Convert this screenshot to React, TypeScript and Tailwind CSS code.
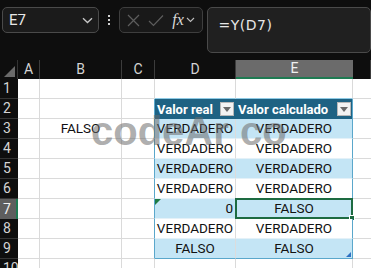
import React from "react";

const cols = ["", "A", "B", "C", "D", "E", ""];

function Chevron({ className = "" }: { className?: string }) {
  return (
    <svg className={className} width="11" height="7" viewBox="0 0 11 7" fill="none">
      <path d="M1 1.2 L5.5 5.5 L10 1.2" stroke="#c8c8c8" strokeWidth="1.3" />
    </svg>
  );
}

function DropBtn() {
  return (
    <div className="w-[14px] h-[14px] bg-[#f3f3f3] border border-[#b8b8b8] flex items-center justify-center shrink-0">
      <svg width="8" height="5" viewBox="0 0 8 5">
        <path d="M0 0 L8 0 L4 5 Z" fill="#6a6a6a" />
      </svg>
    </div>
  );
}

export default function App() {
  const rowsData: Record<number, { b?: string; d?: string; e?: string; dAlign?: string }> = {
    3: { b: "FALSO", d: "VERDADERO", e: "VERDADERO" },
    4: { d: "VERDADERO", e: "VERDADERO" },
    5: { d: "VERDADERO", e: "VERDADERO" },
    6: { d: "VERDADERO", e: "VERDADERO" },
    7: { d: "0", e: "FALSO", dAlign: "right" },
    8: { d: "VERDADERO", e: "VERDADERO" },
    9: { d: "FALSO", e: "FALSO" },
  };

  const rows = [1, 2, 3, 4, 5, 6, 7, 8, 9, 10];

  return (
    <div
      className="relative w-[371px] h-[268px] overflow-hidden bg-[#0e0e0e]"
      style={{ fontFamily: "Roboto, 'Liberation Sans', sans-serif" }}
    >
      {/* Top formula bar */}
      <div className="h-[60px] flex items-start pt-[7px] pl-[2px]">
        <div className="w-[100px] h-[26px] rounded-[5px] border border-[#4a4a4a] bg-[#1b1b1b] flex items-center justify-between pl-[6px] pr-[5px]">
          <span className="text-[15px] text-[#e8e8e8] leading-none">E7</span>
          <Chevron />
        </div>
        <div className="w-[21px] h-[26px] flex flex-col items-center justify-center gap-[2px]">
          <div className="w-[2px] h-[2px] bg-[#cfcfcf]" />
          <div className="w-[2px] h-[2px] bg-[#cfcfcf]" />
          <div className="w-[2px] h-[2px] bg-[#cfcfcf]" />
        </div>
        <div className="w-[86px] h-[26px] rounded-[5px] border border-[#3e3e3e] bg-[#191919] flex items-center pl-[7px] gap-[8px]">
          <svg width="13" height="13" viewBox="0 0 13 13">
            <path d="M1 1 L12 12 M12 1 L1 12" stroke="#5d5d5d" strokeWidth="1.2" />
          </svg>
          <svg width="16" height="13" viewBox="0 0 16 13">
            <path d="M1 7 L5.5 11.5 L15 1.5" stroke="#5d5d5d" strokeWidth="1.2" fill="none" />
          </svg>
          <div className="flex items-center gap-[2px]">
            <span
              className="text-[16px] italic text-[#dadada] leading-none"
              style={{ fontFamily: "'Liberation Serif', serif" }}
            >
              fx
            </span>
            <svg width="9" height="6" viewBox="0 0 9 6" fill="none">
              <path d="M1 1 L4.5 4.5 L8 1" stroke="#bdbdbd" strokeWidth="1.1" />
            </svg>
          </div>
        </div>
        <div className="ml-[4px] w-[170px] h-[46px] rounded-[5px] border border-[#4a4a4a] bg-[#202020] pl-[11px] pt-[5px]">
          <span
            className="text-[14px] text-[#e6e6e6] tracking-[0.5px]"
            style={{ fontFamily: "'DejaVu Sans', sans-serif" }}
          >
            =Y(D7)
          </span>
        </div>
      </div>

      {/* Grid */}
      <div className="grid grid-cols-[18px_22px_82px_33px_81px_117px_1fr] grid-rows-[19px_repeat(10,20px)]">
        {cols.map((c, i) => {
          if (i === 0) {
            return (
              <div key="corner" className="relative bg-[#0e0e0e] border-r border-[#333]">
                <svg className="absolute right-[2px] bottom-[2px]" width="11" height="11" viewBox="0 0 11 11">
                  <path d="M11 0 L11 11 L0 11 Z" fill="#6a6a6a" />
                </svg>
              </div>
            );
          }
          if (c === "E") {
            return (
              <div
                key={i}
                className="bg-[#6b6b6b] border-b-2 border-[#1f7a52] flex items-center justify-center text-[14px] text-[#f0f0f0]"
              >
                E
              </div>
            );
          }
          return (
            <div
              key={i}
              className="bg-[#0e0e0e] border-r border-[#3c3c3c] flex items-center justify-center text-[14px] text-[#d4d4d4]"
            >
              {c}
            </div>
          );
        })}

        {rows.map((r) => {
          const data = rowsData[r] || {};
          const inTable = r >= 2 && r <= 9;
          const band = r >= 3 && r <= 9 && r % 2 === 1;
          const tableBg = band ? "bg-[#c4e5f5]" : "bg-white";
          return (
            <React.Fragment key={r}>
              {r === 7 ? (
                <div className="bg-[#5e5e5e] border-r-2 border-[#1f7a52] flex items-center pl-[3px] text-[14px] text-[#f0f0f0]">
                  {r}
                </div>
              ) : (
                <div className="bg-[#0e0e0e] border-b border-[#333] flex items-center pl-[3px] text-[14px] text-[#d4d4d4]">
                  {r}
                </div>
              )}
              <div className="bg-white border-r border-b border-[#dadada]" />
              <div className="bg-white border-r border-b border-[#dadada] flex items-center justify-center text-[13.5px] text-[#111]">
                {data.b}
              </div>
              <div
                className={`bg-white border-b border-r ${
                  inTable ? "border-b-[#dadada] border-r-[#5aa7cb]" : "border-[#dadada]"
                }`}
              />
              {r === 2 ? (
                <div className="bg-[#1e6283] border-r border-r-[#1e6283] flex items-center justify-between pl-[2px] pr-[1px]">
                  <span className="text-[13px] font-bold text-white leading-none">Valor real</span>
                  <DropBtn />
                </div>
              ) : inTable ? (
                <div
                  className={`relative ${tableBg} border-r border-b ${r === 9 ? "border-b-[#5aa7cb]" : "border-b-[#e4f1f8]"} border-r-[#dcdcdc] flex items-center ${
                    data.dAlign === "right" ? "justify-end pr-[2px]" : "justify-center"
                  } text-[13.5px] text-[#111]`}
                >
                  {r === 7 && (
                    <svg className="absolute left-0 top-0" width="6" height="6" viewBox="0 0 6 6">
                      <path d="M0 0 L6 0 L0 6 Z" fill="#1e7b45" />
                    </svg>
                  )}
                  {data.d}
                </div>
              ) : (
                <div className={`bg-white border-r border-b ${r === 1 ? "border-b-[#8fcbe5]" : "border-b-[#dadada]"} border-r-[#dadada]`} />
              )}
              {r === 2 ? (
                <div className="bg-[#1e6283] border-r border-r-[#5aa7cb] flex items-center justify-between pl-[2px] pr-[1px]">
                  <span className="text-[13px] font-bold text-white leading-none">Valor calculado</span>
                  <DropBtn />
                </div>
              ) : inTable ? (
                <div
                  className={`relative ${tableBg} border-r border-b border-r-[#5aa7cb] ${r === 9 ? "border-b-[#5aa7cb]" : "border-b-[#e4f1f8]"} flex items-center justify-center text-[13.5px] text-[#111]`}
                >
                  {data.e}
                  {r === 7 && (
                    <div className="absolute left-[-1px] top-[-1px] right-[-1px] bottom-[-1px] border-2 border-[#1d6b41] pointer-events-none">
                      <div className="absolute right-[-4px] bottom-[-4px] w-[6px] h-[6px] bg-[#1d6b41] border border-white" />
                    </div>
                  )}
                  {r === 9 && (
                    <svg className="absolute right-[1px] bottom-[1px]" width="5" height="5" viewBox="0 0 5 5">
                      <path d="M5 0 L5 5 L0 5 Z" fill="#2f72c4" />
                    </svg>
                  )}
                </div>
              ) : (
                <div className={`bg-white border-r border-b ${r === 1 ? "border-b-[#8fcbe5]" : "border-b-[#dadada]"} border-r-[#dadada]`} />
              )}
              <div className="bg-white border-b border-[#dadada]" />
            </React.Fragment>
          );
        })}
      </div>

      {/* Watermark */}
      <div
        className="absolute left-[91px] top-[111px] text-[40px] font-bold text-[#6a6a6a]/55 leading-none pointer-events-none"
        style={{ fontFamily: "'Liberation Sans', sans-serif" }}
      >
        codeAr co
      </div>
    </div>
  );
}
